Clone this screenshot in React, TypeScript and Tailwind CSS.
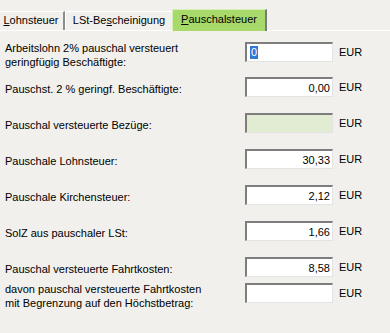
import type { ReactNode } from 'react'

type Row = {
  label: ReactNode
  value?: string
  twoLine?: boolean
  tinted?: boolean
  selected?: boolean
  gap: string
}

const rows: Row[] = [
  {
    label: (
      <>
        Arbeitslohn 2% pauschal versteuert
        <br />
        geringfügig Beschäftigte:
      </>
    ),
    twoLine: true,
    selected: true,
    gap: 'mt-0',
  },
  { label: 'Pauschst. 2 % geringf. Beschäftigte:', value: '0,00', gap: 'mt-[15px]' },
  { label: 'Pauschal versteuerte Bezüge:', tinted: true, gap: 'mt-4' },
  { label: 'Pauschale Lohnsteuer:', value: '30,33', gap: 'mt-4' },
  { label: 'Pauschale Kirchensteuer:', value: '2,12', gap: 'mt-4' },
  { label: 'SolZ aus pauschaler LSt:', value: '1,66', gap: 'mt-4' },
  { label: 'Pauschal versteuerte Fahrtkosten:', value: '8,58', gap: 'mt-4' },
  {
    label: (
      <>
        davon pauschal versteuerte Fahrtkosten
        <br />
        mit Begrenzung auf den Höchstbetrag:
      </>
    ),
    twoLine: true,
    gap: 'mt-[6px]',
  },
]

const Field = ({ row }: { row: Row }) => (
  <div
    className={`flex h-[20px] w-[88px] items-center justify-end border-t-2 border-l-2 border-r border-b border-t-[#7d7d7d] border-l-[#7d7d7d] border-r-[#e3e3e3] border-b-[#e3e3e3] pr-[2px] ${
      row.tinted ? 'bg-[#e1ecd2]' : 'bg-white'
    }`}
  >
    {row.selected ? (
      <div className="flex w-full pl-[3px]">
        <span className="bg-[#3177d6] px-px leading-[13px] text-white">0</span>
      </div>
    ) : (
      <span className="leading-[14px]">{row.value}</span>
    )}
  </div>
)

const App = () => {
  return (
    <div
      className="h-[333px] w-[390px] overflow-hidden bg-[#f1f0ec] text-[11px] text-black"
      style={{ fontFamily: '"Liberation Sans", Arial, sans-serif' }}
    >
      {/* tab strip */}
      <div className="flex h-[31px] items-end border-b border-white">
        <div className="-ml-[2px] flex h-[19px] w-[67px] items-center justify-center border-t border-l border-white border-r-2 border-r-[#8c8c8c] pb-px">
          <span>
            <u>L</u>ohnsteuer
          </span>
        </div>
        <div className="flex h-[19px] w-[109px] items-center justify-center border-t border-l border-white border-r-2 border-r-[#8c8c8c] pb-px">
          <span>
            LSt-Be<u>s</u>cheinigung
          </span>
        </div>
        <div className="relative -mb-px -ml-[2px] flex h-[22px] w-[95px] items-center justify-center border-t border-l border-[#d6efb6] border-r-2 border-r-[#7a7a7a] bg-[#a8d96b] pb-[2px]">
          <span>
            <u>P</u>auschalsteuer
          </span>
        </div>
      </div>

      {/* form */}
      <div className="flex flex-col pt-[11px]">
        {rows.map((row, i) => (
          <div key={i} className={`flex h-[20px] items-start ${row.gap}`}>
            <div
              className={`w-[245px] shrink-0 pl-[5px] leading-[14px] ${
                row.twoLine ? '-mt-px' : 'mt-[5px]'
              }`}
            >
              {row.label}
            </div>
            <Field row={row} />
            <span className="ml-[6px] self-center leading-[14px]">EUR</span>
          </div>
        ))}
      </div>
    </div>
  )
}

export default App
